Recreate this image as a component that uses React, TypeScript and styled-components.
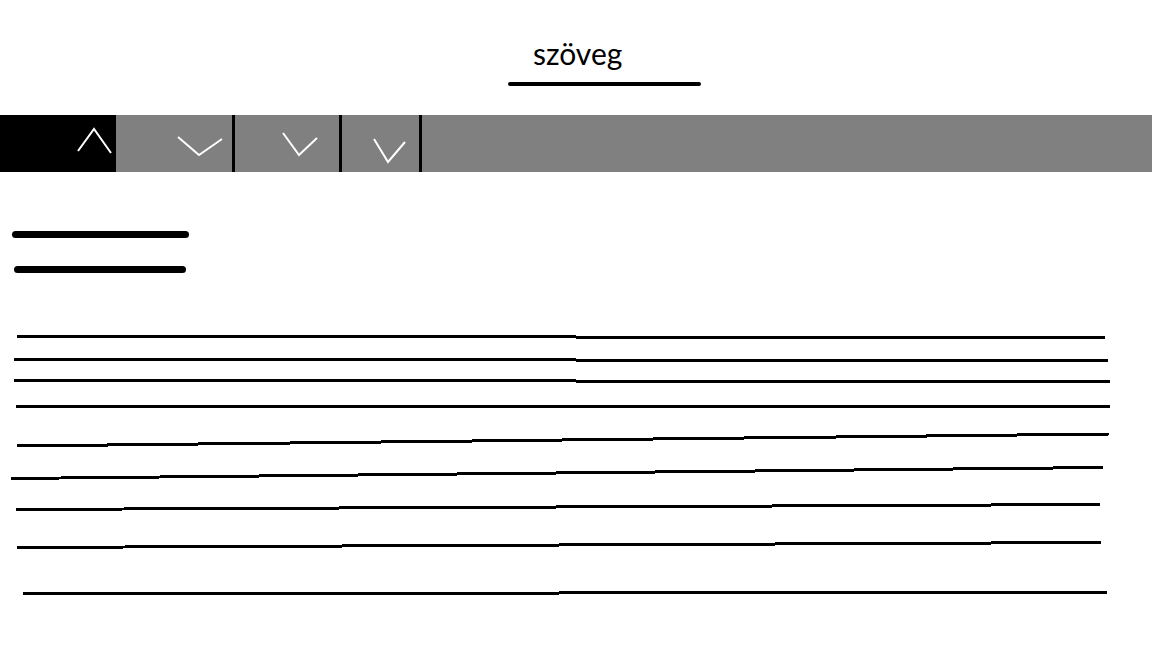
import React from "react";
import styled, { createGlobalStyle } from "styled-components";

const GlobalStyle = createGlobalStyle`
  html, body {
    margin: 0;
    padding: 0;
    background: #ffffff;
    font-family: Lato, "Liberation Sans", sans-serif;
  }
  * { box-sizing: border-box; }
`;

const Page = styled.div`
  width: 1152px;
  height: 648px;
  background: #ffffff;
  display: flex;
  flex-direction: column;
  overflow: hidden;
`;

const Header = styled.header`
  height: 115px;
  padding-top: 35px;
  padding-left: 57px;
  display: flex;
  justify-content: center;
  align-items: flex-start;
`;

const TitleBlock = styled.div`
  width: 193px;
  display: flex;
  flex-direction: column;
  align-items: flex-start;
`;

const TitleText = styled.h1`
  margin: 0 0 0 25px;
  font-family: Lato, "Liberation Sans", sans-serif;
  font-weight: 400;
  font-size: 30px;
  line-height: 36px;
  color: #000000;
`;

const TitleUnderline = styled.div`
  margin-top: 11px;
  width: 193px;
  height: 4px;
  border-radius: 2px;
  background: #000000;
`;

const NavBar = styled.nav`
  height: 57px;
  background: #808080;
  display: flex;
  align-items: stretch;
`;

const NavCell = styled.div<{ $w: number; $active?: boolean; $divider?: boolean; $padL: number; $padT: number }>`
  width: ${(p) => p.$w}px;
  flex: none;
  background: ${(p) => (p.$active ? "#000000" : "#808080")};
  border-right: ${(p) => (p.$divider ? "3px solid #000000" : "none")};
  padding-left: ${(p) => p.$padL}px;
  padding-top: ${(p) => p.$padT}px;
  display: flex;
  align-items: flex-start;
`;

const NavRest = styled.div`
  flex: 1;
`;

const ChevronSvg = styled.svg`
  display: block;
  overflow: visible;
`;

const Content = styled.main`
  display: flex;
  flex-direction: column;
  align-items: flex-start;
`;

const HeadingBar = styled.div<{ $w: number; $ml: number; $mt: number }>`
  width: ${(p) => p.$w}px;
  margin-left: ${(p) => p.$ml}px;
  margin-top: ${(p) => p.$mt}px;
  height: 7px;
  border-radius: 4px;
  background: #000000;
`;

const RuleList = styled.div`
  margin-top: 57px;
  display: flex;
  flex-direction: column;
  width: 1152px;
`;

const RuleRow = styled.svg<{ $mt: number }>`
  display: block;
  margin-top: ${(p) => p.$mt}px;
`;

type Chevron = { w: number; h: number; pts: string; padL: number; padT: number; cell: number; active?: boolean; divider?: boolean };

const chevrons: Chevron[] = [
  { cell: 116, active: true, padL: 76, padT: 12, w: 37, h: 28, pts: "2,24 18,2 35,26" },
  { cell: 119, divider: true, padL: 60, padT: 20, w: 48, h: 22, pts: "2,2 23,20 46,4" },
  { cell: 107, divider: true, padL: 46, padT: 16, w: 38, h: 26, pts: "2,2 18,24 36,7" },
  { cell: 80, divider: true, padL: 30, padT: 22, w: 35, h: 27, pts: "2,2 16,25 33,5" },
];

const rules = [
  { xl: 17, yl: 336, xr: 1105, yr: 337 },
  { xl: 14, yl: 359, xr: 1108, yr: 360 },
  { xl: 14, yl: 380, xr: 1110, yr: 381 },
  { xl: 16, yl: 405, xr: 1110, yr: 405 },
  { xl: 17, yl: 445, xr: 1109, yr: 433 },
  { xl: 11, yl: 478, xr: 1103, yr: 467 },
  { xl: 16, yl: 509, xr: 1100, yr: 504 },
  { xl: 17, yl: 547, xr: 1101, yr: 542 },
  { xl: 23, yl: 593, xr: 1107, yr: 591 },
];

const ROW_H = 14;

export default function App() {
  let prevMid: number | null = null;
  return (
    <Page>
      <GlobalStyle />
      <Header>
        <TitleBlock>
          <TitleText>szöveg</TitleText>
          <TitleUnderline />
        </TitleBlock>
      </Header>
      <NavBar>
        {chevrons.map((c, i) => (
          <NavCell key={i} $w={c.cell} $active={c.active} $divider={c.divider} $padL={c.padL} $padT={c.padT}>
            <ChevronSvg width={c.w} height={c.h} viewBox={`0 0 ${c.w} ${c.h}`}>
              <polyline points={c.pts} fill="none" stroke="#ffffff" strokeWidth={2} />
            </ChevronSvg>
          </NavCell>
        ))}
        <NavRest />
      </NavBar>
      <Content>
        <HeadingBar $w={177} $ml={12} $mt={59} />
        <HeadingBar $w={172} $ml={14} $mt={28} />
        <RuleList>
          {rules.map((r, i) => {
            const mid = (r.yl + r.yr) / 2;
            const mt = prevMid === null ? 0 : mid - prevMid - ROW_H;
            prevMid = mid;
            const c = ROW_H / 2;
            return (
              <RuleRow key={i} $mt={mt} width={1152} height={ROW_H} viewBox={`0 0 1152 ${ROW_H}`}>
                <line
                  x1={r.xl}
                  y1={c + (r.yl - mid)}
                  x2={r.xr}
                  y2={c + (r.yr - mid)}
                  stroke="#000000"
                  strokeWidth={3}
                  shapeRendering="crispEdges"
                />
              </RuleRow>
            );
          })}
        </RuleList>
      </Content>
    </Page>
  );
}
